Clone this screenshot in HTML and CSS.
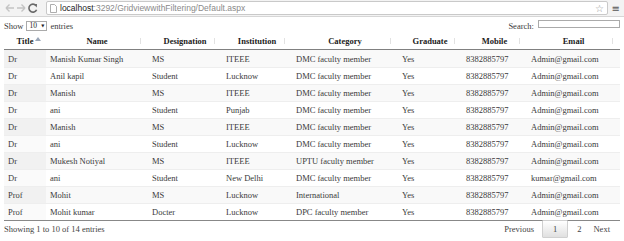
FILE: index.html
```html
<!DOCTYPE html>
<html>
<head>
    <title>Default.aspx</title>
    <link rel="stylesheet" href="styles.css">
</head>
<body>
    <div class="chrome">
        <div class="nav">
            <svg width="34" height="12" viewBox="0 0 34 12">
                <path d="M2 6h8M2 6l3.5-3.5M2 6l3.5 3.5" stroke="#c4c4c4" stroke-width="1.4" fill="none"/>
                <path d="M21 6h-8M21 6l-3.5-3.5M21 6l-3.5 3.5" stroke="#c4c4c4" stroke-width="1.4" fill="none"/>
                <path d="M32 3.5a4 4 0 1 0 0.6 4.2" stroke="#6a6a6a" stroke-width="1.6" fill="none"/>
                <path d="M29.6 2.2l3.4-0.2-0.2 3.4z" fill="#6a6a6a"/>
            </svg>
        </div>
        <div class="address">
            <svg width="7" height="9" viewBox="0 0 7 9"><path d="M0.5 0.5h4l2 2v6h-6z" fill="#fff" stroke="#999" stroke-width="0.8"/></svg>
            <span class="host">localhost</span><span class="path">:3292/GridviewwithFiltering/Default.aspx</span>
            <span class="star">☆</span>
        </div>
        <div class="menu">≡</div>
    </div>

    <div class="wrapper">
        <div class="controls">
            <div class="length">Show <span class="select">10 <span class="caret">▼</span></span> entries</div>
            <label>Search: <input type="search"></label>
        </div>

        <table class="grid">
            <colgroup>
                <col style="width:42px"><col style="width:102px"><col style="width:74px"><col style="width:70px">
                <col style="width:106px"><col style="width:64px"><col style="width:65px"><col style="width:93px">
            </colgroup>
            <thead>
                <tr>
                    <th class="asc">Title</th>
                    <th>Name</th>
                    <th>Designation</th>
                    <th>Institution</th>
                    <th>Category</th>
                    <th>Graduate</th>
                    <th>Mobile</th>
                    <th>Email</th>
                </tr>
            </thead>
            <tbody>
                <tr><td>Dr</td><td>Manish Kumar Singh</td><td>MS</td><td>ITEEE</td><td>DMC faculty member</td><td>Yes</td><td>8382885797</td><td>Admin@gmail.com</td></tr>
                <tr><td>Dr</td><td>Anil kapil</td><td>Student</td><td>Lucknow</td><td>DMC faculty member</td><td>Yes</td><td>8382885797</td><td>Admin@gmail.com</td></tr>
                <tr><td>Dr</td><td>Manish</td><td>MS</td><td>ITEEE</td><td>DMC faculty member</td><td>Yes</td><td>8382885797</td><td>Admin@gmail.com</td></tr>
                <tr><td>Dr</td><td>ani</td><td>Student</td><td>Punjab</td><td>DMC faculty member</td><td>Yes</td><td>8382885797</td><td>Admin@gmail.com</td></tr>
                <tr><td>Dr</td><td>Manish</td><td>MS</td><td>ITEEE</td><td>DMC faculty member</td><td>Yes</td><td>8382885797</td><td>Admin@gmail.com</td></tr>
                <tr><td>Dr</td><td>ani</td><td>Student</td><td>Lucknow</td><td>DMC faculty member</td><td>Yes</td><td>8382885797</td><td>Admin@gmail.com</td></tr>
                <tr><td>Dr</td><td>Mukesh Notiyal</td><td>MS</td><td>ITEEE</td><td>UPTU faculty member</td><td>Yes</td><td>8382885797</td><td>Admin@gmail.com</td></tr>
                <tr><td>Dr</td><td>ani</td><td>Student</td><td>New Delhi</td><td>DMC faculty member</td><td>Yes</td><td>8382885797</td><td>kumar@gmail.com</td></tr>
                <tr><td>Prof</td><td>Mohit</td><td>MS</td><td>Lucknow</td><td>International</td><td>Yes</td><td>8382885797</td><td>Admin@gmail.com</td></tr>
                <tr><td>Prof</td><td>Mohit kumar</td><td>Docter</td><td>Lucknow</td><td>DPC faculty member</td><td>Yes</td><td>8382885797</td><td>Admin@gmail.com</td></tr>
            </tbody>
        </table>

        <div class="footer">
            <div class="info">Showing 1 to 10 of 14 entries</div>
            <div class="paging">
                <span class="btn">Previous</span>
                <span class="btn current">1</span>
                <span class="btn">2</span>
                <span class="btn">Next</span>
            </div>
        </div>
    </div>
</body>
</html>
```

FILE: styles.css
```css
body {
    margin: 0;
    font-family: 'Liberation Serif', 'Times New Roman', serif;
    font-size: 8.5px;
    color: #3a3a3a;
    background: #fff;
}
.chrome {
    height: 16px;
    background: #f3f3f3;
    border-bottom: 1px solid #d6d6d6;
    display: flex;
    align-items: center;
    padding: 0 4px;
}
.nav {
    width: 42px;
    display: flex;
    align-items: center;
}
.address {
    flex: 1;
    height: 12px;
    background: #fff;
    border: 1px solid #c9c9c9;
    border-radius: 2px;
    display: flex;
    align-items: center;
    padding: 0 3px;
    font-family: 'Liberation Sans', Arial, sans-serif;
    font-size: 8.5px;
}
.address svg {
    margin-right: 3px;
}
.host {
    color: #222;
}
.path {
    color: #8a8a8a;
}
.star {
    margin-left: auto;
    color: #999;
    font-size: 10px;
}
.menu {
    width: 12px;
    text-align: right;
    color: #555;
    font-family: 'DejaVu Sans', sans-serif;
    font-size: 10px;
}
.wrapper {
    padding: 0 4px;
}
.controls {
    height: 15px;
    display: flex;
    justify-content: space-between;
    align-items: center;
    margin-top: 1px;
}
.length {
    display: flex;
    align-items: center;
}
.select {
    display: inline-flex;
    align-items: center;
    justify-content: space-between;
    width: 15px;
    height: 8px;
    padding: 0 2px;
    margin: 0 3px;
    border: 1px solid #aaa;
    background: #fff;
    font-size: 7.5px;
    color: #222;
}
.caret {
    font-family: 'DejaVu Sans', sans-serif;
    font-size: 4px;
}
.controls input {
    width: 82px;
    height: 8px;
    padding: 0;
    border: 1px solid #aaa;
    margin-left: 2px;
}
.grid {
    width: 616px;
    table-layout: fixed;
    border-collapse: collapse;
}
.grid th {
    position: relative;
    height: 16px;
    padding: 0 4px;
    font-weight: bold;
    color: #222;
    border-bottom: 1px solid #808080;
    text-align: center;
}
.grid th::after {
    content: "";
    position: absolute;
    right: 5px;
    top: 5px;
    width: 2px;
    height: 6px;
    border-left: 1px solid #e2e2e2;
}
.grid th.asc::after {
    border-left: 3px solid transparent;
    border-right: 3px solid transparent;
    border-bottom: 4px solid #9aa6b8;
    width: 0;
    height: 0;
    top: 4px;
}
.grid td {
    height: 16px;
    padding: 0 4px;
    border-top: 1px solid #eeeeee;
    white-space: nowrap;
    overflow: hidden;
}
.grid tbody tr:first-child td {
    border-top: none;
    height: 17px;
}
.grid tbody tr:nth-child(odd) {
    background: #f9f9f9;
}
.grid tbody td:first-child {
    background: #fafafa;
}
.grid tbody tr:nth-child(odd) td:first-child {
    background: #f1f1f1;
}
.grid tbody tr:last-child td {
    border-bottom: 1px solid #888;
}
.footer {
    display: flex;
    justify-content: space-between;
    align-items: center;
    margin-top: -1px;
}
.info {
    color: #444;
}
.paging {
    display: flex;
    align-items: center;
    margin-right: 4px;
}
.btn {
    padding: 3px 6px;
    color: #444;
}
.btn.current {
    border: 1px solid #d0d0d0;
    background: linear-gradient(#ffffff, #e0e0e0);
    border-radius: 1px;
    margin: 0 3px 0 2px;
    padding: 3px 10px;
}
```
